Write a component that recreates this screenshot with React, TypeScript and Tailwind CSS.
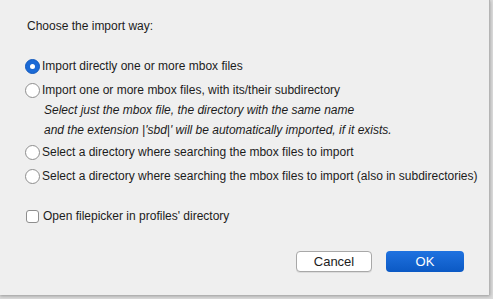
import React, { useState } from "react";

const options = [
  "Import directly one or more mbox files",
  "Import one or more mbox files, with its/their subdirectory",
  "Select a directory where searching the mbox files to import",
  "Select a directory where searching the mbox files to import (also in subdirectories)",
];

const Radio: React.FC<{ checked: boolean }> = ({ checked }) =>
  checked ? (
    <span className="flex h-[15px] w-[15px] shrink-0 items-center justify-center rounded-full bg-[#1b6ad6] border border-[#1259bd]">
      <span className="h-[5px] w-[5px] rounded-full bg-white" />
    </span>
  ) : (
    <span className="h-[15px] w-[15px] shrink-0 rounded-full border border-[#8e8e8e] bg-white" />
  );

export default function App() {
  const [selected, setSelected] = useState(0);
  const [picker, setPicker] = useState(false);

  return (
    <div className="h-[299px] w-[493px] bg-[#dadada] font-['Liberation_Sans',sans-serif] text-[12px] text-[#1c1c1c]">
      <div className="h-[295px] w-[490px] border-r border-[#b4b4b4] bg-[#efefef] shadow-[0_1px_3px_rgba(0,0,0,0.3)]">
        <div className="pl-[27px] pt-[17px] leading-[18px]">Choose the import way:</div>

        <div className="mt-[22px] flex flex-col pl-[25px]">
          {options.map((label, i) => (
            <React.Fragment key={i}>
              <div
                className={`flex h-[18px] cursor-default items-center gap-[2px] ${
                  i === 0 ? "" : i === 2 ? "mt-[3px]" : "mt-[6px]"
                }`}
                onClick={() => setSelected(i)}
              >
                <Radio checked={selected === i} />
                <span className="whitespace-nowrap">{label}</span>
              </div>
              {i === 1 && (
                <div className="flex flex-col pl-[19px] italic">
                  <span className="mt-[1px] h-[20px] leading-[20px]">
                    Select just the mbox file, the directory with the same name
                  </span>
                  <span className="h-[20px] leading-[20px]">
                    and the extension |'sbd|' will be automatically imported, if it exists.
                  </span>
                </div>
              )}
            </React.Fragment>
          ))}
        </div>

        <div
          className="mt-[22px] flex h-[18px] items-center gap-[4px] pl-[26px]"
          onClick={() => setPicker(!picker)}
        >
          <span className="h-[13px] w-[13px] rounded-[3px] border border-[#8e8e8e] bg-white" />
          <span>Open filepicker in profiles' directory</span>
        </div>

        <div className="mt-[26px] flex justify-end gap-[14px] pr-[25px]">
          <button className="h-[21px] w-[76px] rounded-[4px] border border-[#a8a8a8] bg-white text-[13px] leading-none text-[#1c1c1c] shadow-[0_1px_0_rgba(0,0,0,0.08)]">
            Cancel
          </button>
          <button className="h-[21px] w-[78px] rounded-[4px] bg-gradient-to-b from-[#1f72e0] to-[#0b59c4] text-[13px] leading-none text-white">
            OK
          </button>
        </div>
      </div>
    </div>
  );
}
